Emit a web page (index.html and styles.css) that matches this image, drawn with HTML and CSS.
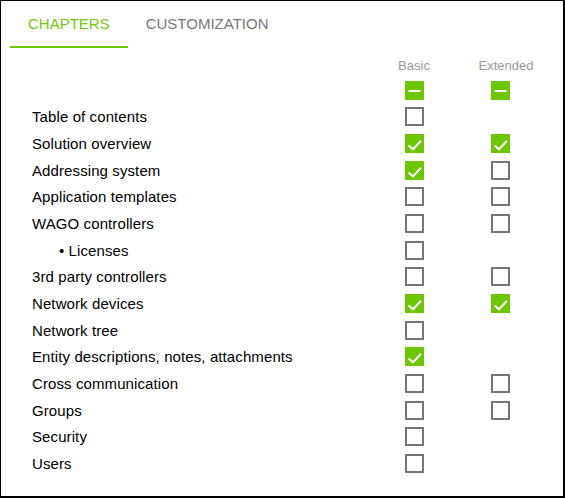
FILE: index.html
```html
<!DOCTYPE html>
<html lang="en">
<head>
    <meta charset="UTF-8">
    <title>Chapters</title>
    <link rel="stylesheet" href="styles.css">
</head>
<body>

<div class="panel">
    <div class="tabs">
        <div class="tab active">CHAPTERS</div>
        <div class="tab">CUSTOMIZATION</div>
    </div>

    <div class="chapters">
        <div class="label"></div>
        <div class="col-head">Basic</div>
        <div class="col-head">Extended</div>

        <div class="label"></div>
        <div class="cell"><span class="box mixed"><svg viewBox="0 0 19 19"><path d="M3.5 10h12"/></svg></span></div>
        <div class="cell ext"><span class="box mixed"><svg viewBox="0 0 19 19"><path d="M3.5 10h12"/></svg></span></div>

        <div class="label">Table of contents</div>
        <div class="cell"><span class="box"></span></div>
        <div class="cell ext"></div>

        <div class="label">Solution overview</div>
        <div class="cell"><span class="box checked"><svg viewBox="0 0 19 19"><path d="M3.5 11.5l4.5 3.8l8-8.5"/></svg></span></div>
        <div class="cell ext"><span class="box checked"><svg viewBox="0 0 19 19"><path d="M3.5 11.5l4.5 3.8l8-8.5"/></svg></span></div>

        <div class="label">Addressing system</div>
        <div class="cell"><span class="box checked"><svg viewBox="0 0 19 19"><path d="M3.5 11.5l4.5 3.8l8-8.5"/></svg></span></div>
        <div class="cell ext"><span class="box"></span></div>

        <div class="label">Application templates</div>
        <div class="cell"><span class="box"></span></div>
        <div class="cell ext"><span class="box"></span></div>

        <div class="label">WAGO controllers</div>
        <div class="cell"><span class="box"></span></div>
        <div class="cell ext"><span class="box"></span></div>

        <div class="label sub">&bull; Licenses</div>
        <div class="cell"><span class="box"></span></div>
        <div class="cell ext"></div>

        <div class="label">3rd party controllers</div>
        <div class="cell"><span class="box"></span></div>
        <div class="cell ext"><span class="box"></span></div>

        <div class="label">Network devices</div>
        <div class="cell"><span class="box checked"><svg viewBox="0 0 19 19"><path d="M3.5 11.5l4.5 3.8l8-8.5"/></svg></span></div>
        <div class="cell ext"><span class="box checked"><svg viewBox="0 0 19 19"><path d="M3.5 11.5l4.5 3.8l8-8.5"/></svg></span></div>

        <div class="label">Network tree</div>
        <div class="cell"><span class="box"></span></div>
        <div class="cell ext"></div>

        <div class="label">Entity descriptions, notes, attachments</div>
        <div class="cell"><span class="box checked"><svg viewBox="0 0 19 19"><path d="M3.5 11.5l4.5 3.8l8-8.5"/></svg></span></div>
        <div class="cell ext"></div>

        <div class="label">Cross communication</div>
        <div class="cell"><span class="box"></span></div>
        <div class="cell ext"><span class="box"></span></div>

        <div class="label">Groups</div>
        <div class="cell"><span class="box"></span></div>
        <div class="cell ext"><span class="box"></span></div>

        <div class="label">Security</div>
        <div class="cell"><span class="box"></span></div>
        <div class="cell ext"></div>

        <div class="label">Users</div>
        <div class="cell"><span class="box"></span></div>
        <div class="cell ext"></div>
    </div>
</div>

</body>
</html>
```

FILE: styles.css
```css
body {
    margin: 0;
    font-family: 'Liberation Sans', Arial, sans-serif;
    background-color: #fff;
    color: #000;
}

.panel {
    box-sizing: border-box;
    width: 565px;
    height: 498px;
    border-style: solid;
    border-color: #000;
    border-width: 1px 2px 2px 1px;
    background-color: #fff;
}

.tabs {
    display: flex;
    padding-left: 9px;
}

.tab {
    font-size: 15px;
    line-height: 17px;
    padding: 14px 18px 14px;
    border-bottom: 2px solid transparent;
    color: #777;
}

.tab.active {
    color: #76c80c;
    border-bottom-color: #72c70a;
}

.chapters {
    display: grid;
    grid-template-columns: 1fr 60px 70px;
    grid-template-rows: 24px;
    grid-auto-rows: 26.67px;
    column-gap: 27px;
    padding: 5px 22px 0 31px;
    font-size: 15px;
}

.label {
    display: flex;
    align-items: center;
    white-space: nowrap;
    letter-spacing: 0.1px;
}

.label.sub {
    padding-left: 27px;
}

.col-head {
    text-align: center;
    font-size: 13px;
    color: #999;
    align-self: center;
}

.cell {
    display: flex;
    align-items: center;
    justify-content: center;
}

.cell.ext {
    justify-content: flex-start;
    padding-left: 20px;
}

.box {
    box-sizing: border-box;
    width: 19px;
    height: 19px;
    border: 2px solid #757575;
    background-color: #fff;
}

.box.checked,
.box.mixed {
    border: none;
    background-color: #6cc600;
}

.box svg {
    display: block;
    width: 19px;
    height: 19px;
    fill: none;
    stroke: #fff;
    stroke-width: 2;
}
```
